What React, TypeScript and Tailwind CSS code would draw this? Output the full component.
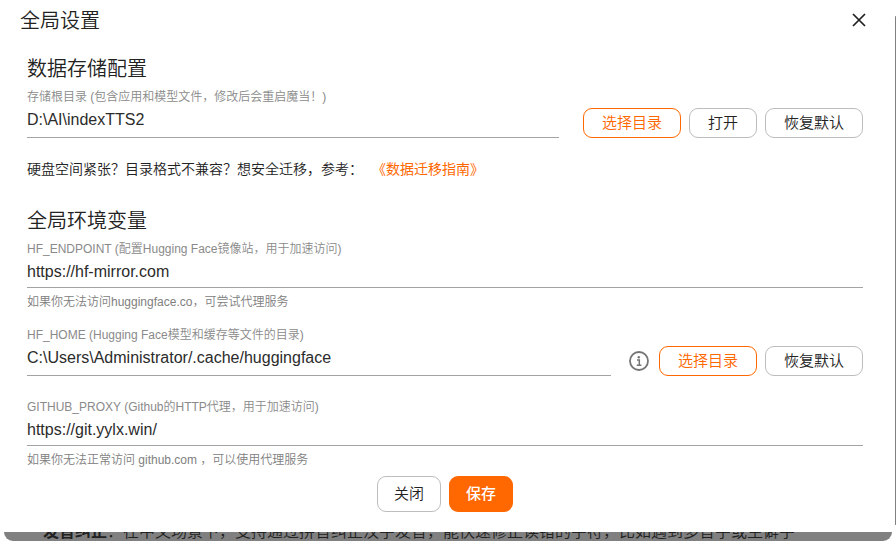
import React from 'react'
import clsx from 'clsx'

type FieldProps = {
  id: string
  label: string
  defaultValue: string
  hint?: string
  tall?: boolean
}

function Field({ id, label, defaultValue, hint, tall }: FieldProps) {
  return (
    <div className="flex min-w-0 flex-1 flex-col">
      <label
        htmlFor={id}
        className="text-[12px] leading-[18px] text-[#8a8a8a]"
      >
        {label}
      </label>
      <input
        id={id}
        type="text"
        defaultValue={defaultValue}
        className={clsx(
          'w-full border-b border-[#a3a3a3] bg-transparent text-base text-[#2b2b2b] outline-none',
          tall ? 'h-8 pb-[3px]' : 'h-[30px] pb-px'
        )}
      />
      {hint && (
        <p className="mt-[5px] text-[12px] leading-[18px] text-[#808080]">
          {hint}
        </p>
      )}
    </div>
  )
}

type ButtonProps = {
  children: React.ReactNode
  primary?: boolean
}

function OutlineButton({ children, primary }: ButtonProps) {
  return (
    <button
      type="button"
      className={clsx(
        'h-[30px] shrink-0 rounded-[9px] border px-[18px] text-[15px] leading-5',
        primary
          ? 'border-[#ff6700] text-[#ff6700]'
          : 'border-[#bdbdbd] text-[#222]'
      )}
    >
      {children}
    </button>
  )
}

function InfoIcon() {
  return (
    <svg
      viewBox="0 0 20 20"
      className="size-5 shrink-0"
      fill="none"
      stroke="#757575"
      aria-hidden="true"
    >
      <circle cx="10" cy="10" r="9" strokeWidth="1.8" />
      <circle cx="9.8" cy="6.2" r="1.2" fill="#757575" stroke="none" />
      <path d="M8 9h2.3v5M7.8 14.3h4.6" strokeWidth="1.5" />
    </svg>
  )
}

function CloseIcon() {
  return (
    <svg
      viewBox="0 0 14 14"
      className="size-3.5"
      fill="none"
      stroke="#1f1f1f"
      strokeWidth="1.7"
      aria-hidden="true"
    >
      <path d="M1 1l12 12M13 1L1 13" />
    </svg>
  )
}

export default function App() {
  return (
    <div className="relative flex h-screen flex-col overflow-hidden bg-white font-['Liberation_Sans','Noto_Sans_CJK_SC',sans-serif] font-[350]">
      <main
        role="dialog"
        aria-labelledby="dialog-title"
        className="shrink-0 bg-white pb-5"
      >
        <header className="flex h-10 items-center justify-between pr-[30px] pl-5">
          <h1 id="dialog-title" className="pt-0.5 text-xl text-[#222]">
            全局设置
          </h1>
          <button type="button" aria-label="关闭">
            <CloseIcon />
          </button>
        </header>

        <form className="pt-[15px] pr-[33px] pl-[27px]">
          <h2 className="text-xl leading-7 text-[#222]">数据存储配置</h2>
          <div className="mt-[5px] flex items-end gap-6">
            <Field
              id="root-dir"
              label="存储根目录 (包含应用和模型文件，修改后会重启魔当！)"
              defaultValue="D:\AI\indexTTS2"
              tall
            />
            <div className="flex gap-2">
              <OutlineButton primary>选择目录</OutlineButton>
              <OutlineButton>打开</OutlineButton>
              <OutlineButton>恢复默认</OutlineButton>
            </div>
          </div>
          <p className="mt-[19px] text-sm leading-6 text-[#222]">
            硬盘空间紧张？目录格式不兼容？想安全迁移，参考：
            <a href="#guide" className="ml-4 font-normal text-[#ff6700]">
              《数据迁移指南》
            </a>
          </p>

          <h2 className="mt-[26px] text-xl leading-7 text-[#222]">
            全局环境变量
          </h2>
          <div className="mt-[5px] flex">
            <Field
              id="hf-endpoint"
              label="HF_ENDPOINT (配置Hugging Face镜像站，用于加速访问)"
              defaultValue="https://hf-mirror.com"
              hint="如果你无法访问huggingface.co，可尝试代理服务"
            />
          </div>
          <div className="mt-[15px] flex items-end gap-[18px]">
            <Field
              id="hf-home"
              label="HF_HOME (Hugging Face模型和缓存等文件的目录)"
              defaultValue="C:\Users\Administrator/.cache/huggingface"
              tall
            />
            <div className="flex items-center gap-2.5">
              <InfoIcon />
              <div className="flex gap-2">
                <OutlineButton primary>选择目录</OutlineButton>
                <OutlineButton>恢复默认</OutlineButton>
              </div>
            </div>
          </div>
          <div className="mt-[22px] flex">
            <Field
              id="github-proxy"
              label="GITHUB_PROXY (Github的HTTP代理，用于加速访问)"
              defaultValue="https://git.yylx.win/"
              hint="如果你无法正常访问 github.com ，可以使用代理服务"
            />
          </div>
        </form>

        <footer className="mt-[7px] flex justify-center gap-2 pr-1.5">
          <button
            type="button"
            className="h-9 w-16 rounded-[9px] border border-[#bdbdbd] text-[15px] text-[#222]"
          >
            关闭
          </button>
          <button
            type="button"
            className="h-9 w-16 rounded-[9px] bg-[#ff6700] text-[15px] font-medium text-white"
          >
            保存
          </button>
        </footer>
      </main>

      {/* dimmed page behind the dialog */}
      <div className="mx-1 flex min-h-0 flex-1 items-end overflow-hidden rounded-b-[16px] bg-[#808080] pl-[39px]">
        <p className="text-base leading-[18px] whitespace-nowrap text-[#222]">
          <strong className="font-bold">发音纠正</strong>
          ：在中文场景下，支持通过拼音纠正汉字发音，能快速修正读错的字符，比如遇到多音字或生僻字
        </p>
      </div>
      <div className="absolute top-4 right-0 bottom-4 w-px rounded-full bg-[#808080]" />
    </div>
  )
}
